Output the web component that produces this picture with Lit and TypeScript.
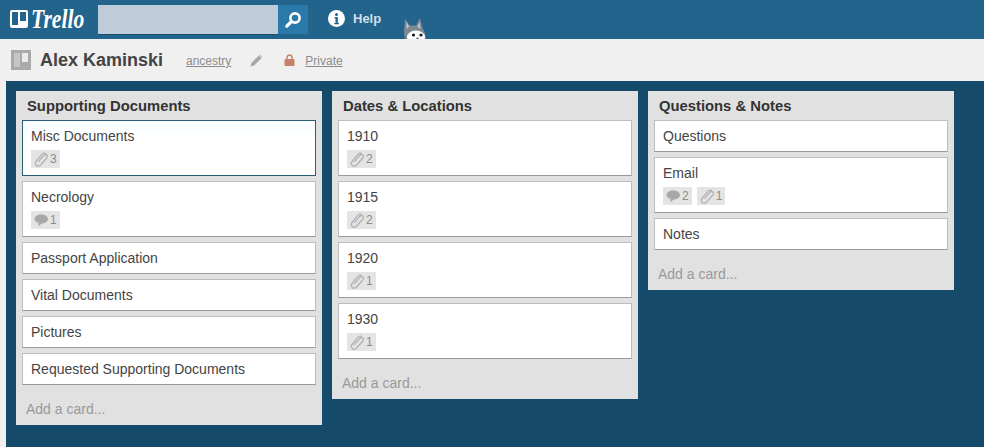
import { LitElement, html, css, svg } from "lit";
import { customElement } from "lit/decorators.js";

type Badge = { kind: "clip" | "chat"; n: number };
type Card = { t: string; b?: Badge[]; active?: boolean };
type List = { title: string; cards: Card[] };

const clip = (n: number) => ({ kind: "clip" as const, n });
const chat = (n: number) => ({ kind: "chat" as const, n });

const LISTS: List[] = [
  {
    title: "Supporting Documents",
    cards: [
      { t: "Misc Documents", b: [clip(3)], active: true },
      { t: "Necrology", b: [chat(1)] },
      { t: "Passport Application" },
      { t: "Vital Documents" },
      { t: "Pictures" },
      { t: "Requested Supporting Documents" },
    ],
  },
  {
    title: "Dates & Locations",
    cards: [
      { t: "1910", b: [clip(2)] },
      { t: "1915", b: [clip(2)] },
      { t: "1920", b: [clip(1)] },
      { t: "1930", b: [clip(1)] },
    ],
  },
  {
    title: "Questions & Notes",
    cards: [{ t: "Questions" }, { t: "Email", b: [chat(2), clip(1)] }, { t: "Notes" }],
  },
];

const clipIcon = svg`<svg class="bi" viewBox="0 0 16 16" width="16" height="16"><path d="M5.700 10.300 10.600 4.600c1.100-1.200 2.500-1.300 3.300-.6s.7 2.100-.3 3.200L7.800 13.700c-1.500 1.500-3.400 1.700-4.600.7s-1.100-2.900.2-4.400L9.200 3.200c.9-1 2.200-1.300 3.100-.8" fill="none" stroke="#b2b2b2" stroke-width="1.300" stroke-linecap="round"/></svg>`;
const chatIcon = svg`<svg class="bi" viewBox="0 0 16 16" width="16" height="16"><path d="M8.300 2.500c3.700 0 6.700 2 6.700 4.600 0 2.600-2.900 4.500-6.400 4.500l-3.400 3 .5-3.500C3.100 10.300 1.500 8.800 1.500 7.100c0-2.600 3.100-4.600 6.800-4.600Z" fill="#a8a8a8"/></svg>`;

@customElement("app-root")
export class AppRoot extends LitElement {
  static styles = css`
    :host {
      display: flex;
      flex-direction: column;
      width: 984px;
      height: 447px;
      overflow: hidden;
      font-family: "Liberation Sans", Arial, sans-serif;
      background: #f0f0f0;
      color: #333;
    }
    .top {
      flex: 0 0 39px;
      height: 39px;
      box-sizing: border-box;
      background: #23648c;
      display: flex;
      align-items: flex-start;
      padding: 5px 0 0 10px;
      overflow: hidden;
    }
    .logo {
      display: flex;
      align-items: center;
      width: 88px;
      height: 28px;
      gap: 3px;
      flex: none;
    }
    .word {
      display: inline-block;
      font-family: "Liberation Serif", serif;
      font-style: italic;
      font-weight: 700;
      font-size: 27px;
      color: #fff;
      line-height: 28px;
      transform-origin: left center;
      transform: scaleX(0.8);
    }
    .search {
      width: 180px;
      height: 29px;
      background: #bdccd8;
      box-shadow: 0 1px 0 #184d6e;
      flex: none;
    }
    .sbtn {
      width: 30px;
      height: 29px;
      background: #2b79aa;
      display: flex;
      align-items: center;
      justify-content: center;
      flex: none;
    }
    .help {
      display: flex;
      align-items: center;
      gap: 8px;
      margin-left: 20px;
      height: 27px;
      font-weight: 700;
      font-size: 13px;
      color: #d0dfea;
      flex: none;
    }
    .husky {
      margin: 13px 0 0 21px;
      flex: none;
      display: block;
    }
    .sub {
      flex: 0 0 42px;
      display: flex;
      align-items: center;
      padding-left: 11px;
      box-sizing: border-box;
      background: #f0f0f0;
    }
    .name {
      font-weight: 700;
      font-size: 18px;
      color: #444;
      margin-left: 9px;
      width: 146px;
    }
    .lnk {
      font-size: 12px;
      color: #8c8c8c;
      text-decoration: underline;
      padding-top: 2px;
    }
    .pencil {
      margin: 0 0 0 19px;
      display: block;
    }
    .lock {
      margin: 0 0 0 21px;
      display: block;
    }
    .private {
      margin-left: 10px;
    }
    .board {
      flex: 1;
      margin-left: 6px;
      background: #154a6b;
      padding: 10px 0 0 10px;
      display: flex;
      align-items: flex-start;
      gap: 10px;
      min-height: 0;
    }
    .list {
      width: 306px;
      box-sizing: border-box;
      background: #e1e1e1;
      padding: 0 6px;
      display: flex;
      flex-direction: column;
    }
    .title {
      height: 29px;
      line-height: 30px;
      font-weight: 700;
      font-size: 14.8px;
      color: #333;
      padding-left: 5px;
    }
    .cards {
      display: flex;
      flex-direction: column;
      gap: 5px;
    }
    .card {
      background: #fff;
      border: 1px solid #bdbdbd;
      border-bottom-color: #9a9a9a;
      box-sizing: border-box;
      padding: 6px 8px 5px;
      font-size: 14px;
      line-height: 19px;
      color: #444;
      min-height: 32px;
    }
    .card.active {
      border-color: #2b5c78;
      background: linear-gradient(#f7fcff, #fff 30%);
    }
    .badges {
      display: flex;
      gap: 5px;
      margin: 4px 0 2px;
    }
    .badge {
      display: flex;
      align-items: center;
      height: 18px;
      padding: 0 3px 0 2px;
      background: #e4e4e4;
      font-size: 12px;
      color: #8c8c8c;
      gap: 1px;
    }
    .bi {
      display: block;
    }
    .add {
      height: 40px;
      box-sizing: border-box;
      padding: 15px 0 0 4px;
      font-size: 14px;
      line-height: 18px;
      color: #999;
    }
  `;

  renderBadge(b: Badge) {
    return html`<span class="badge">${b.kind === "clip" ? clipIcon : chatIcon}${b.n}</span>`;
  }

  render() {
    return html`
      <div class="top">
        <div class="logo">
          <svg width="18" height="18" viewBox="0 0 18 18">
            <path fill-rule="evenodd" fill="#fff" d="M2 0h14a2 2 0 0 1 2 2v14a2 2 0 0 1-2 2H2a2 2 0 0 1-2-2V2a2 2 0 0 1 2-2ZM2 2v13h6V2ZM10 2v9h6V2Z"/>
          </svg>
          <span class="word">Trello</span>
        </div>
        <div class="search"></div>
        <div class="sbtn">
          <svg width="18" height="18" viewBox="0 0 18 18">
            <circle cx="11" cy="7" r="4.600" fill="none" stroke="#fff" stroke-width="2.600"/>
            <path d="M7.500 10.500 2.800 15.200" stroke="#fff" stroke-width="3.200" stroke-linecap="round"/>
          </svg>
        </div>
        <div class="help">
          <svg width="17" height="17" viewBox="0 0 17 17">
            <circle cx="8.500" cy="8.500" r="8.500" fill="#fff"/>
            <circle cx="8.500" cy="4.500" r="1.500" fill="#23648c"/>
            <path d="M6.500 7h3.300v6h1.200v1.200H6.300V13h1.200V8.200h-1Z" fill="#23648c"/>
          </svg>
          <span>Help</span>
        </div>
        <svg class="husky" width="26" height="21" viewBox="0 0 26 21">
          <path d="M3 1 8 7.500h6L18 0l2.500 10 2.500 5 1 6H3l-1-7Z" fill="#7d8a94"/>
          <path d="M4.500 4 7 8.500 4.500 11Z M17.500 4 15.500 9 18.500 10.500Z" fill="#c3ccd2"/>
          <ellipse cx="14" cy="19" rx="9" ry="6.500" fill="#fff"/>
          <circle cx="11.500" cy="17" r="1.600" fill="#111a22"/>
          <circle cx="19" cy="17" r="1.600" fill="#111a22"/>
          <circle cx="15.500" cy="20.500" r="1.100" fill="#4a5560"/>
        </svg>
      </div>
      <div class="sub">
        <svg width="20" height="20" viewBox="0 0 20 20">
          <rect width="20" height="20" fill="#aaa"/>
          <rect x="3" y="3" width="6" height="14" fill="#c6c6c6"/>
          <rect x="11" y="3" width="6" height="9" fill="#ececec"/>
        </svg>
        <span class="name">Alex Kaminski</span>
        <span class="lnk">ancestry</span>
        <svg class="pencil" width="13" height="13" viewBox="0 0 13 13">
          <path d="M0.500 12.500 1.500 8.800 8.800 1.500 11.500 4.200 4.200 11.500Z M9.800 .5l2.700 2.700-.6.600-2.700-2.700Z" fill="#a8a8a8"/>
        </svg>
        <svg class="lock" width="11" height="12" viewBox="0 0 11 12">
          <path d="M3 5V3.500a2.500 2.500 0 0 1 5 0V5" fill="none" stroke="#c9806a" stroke-width="1.500"/>
          <rect x="0.500" y="5" width="10" height="7" rx="1" fill="#c9806a"/>
        </svg>
        <span class="lnk private">Private</span>
      </div>
      <div class="board">
        ${LISTS.map(
          (l) => html`
            <div class="list">
              <div class="title">${l.title}</div>
              <div class="cards">
                ${l.cards.map(
                  (c) => html`
                    <div class="card ${c.active ? "active" : ""}">
                      ${c.t}
                      ${c.b
                        ? html`<div class="badges">${c.b.map((b) => this.renderBadge(b))}</div>`
                        : ""}
                    </div>
                  `
                )}
              </div>
              <div class="add">Add a card...</div>
            </div>
          `
        )}
      </div>
    `;
  }
}
